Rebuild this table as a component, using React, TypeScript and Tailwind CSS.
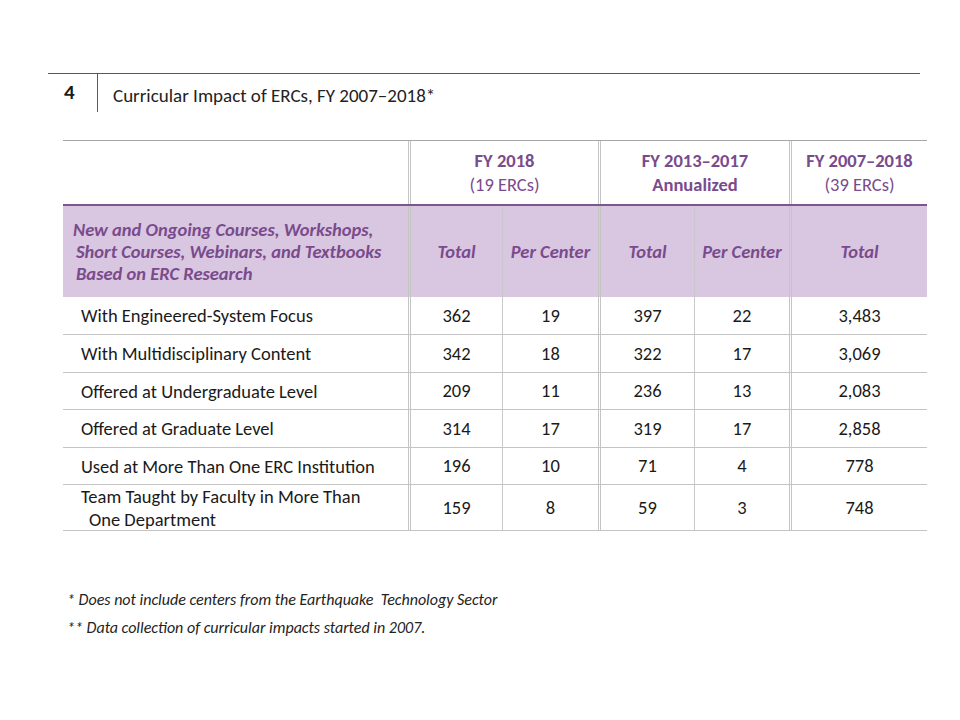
import React from "react";

const font = { fontFamily: "Carlito, Calibri, Lato, 'Open Sans', sans-serif" };

const rows = [
  { label: ["With Engineered-System Focus"], v: ["362", "19", "397", "22", "3,483"], h: "h-[37px]" },
  { label: ["With Multidisciplinary Content"], v: ["342", "18", "322", "17", "3,069"], h: "h-[37px]" },
  { label: ["Offered at Undergraduate Level"], v: ["209", "11", "236", "13", "2,083"], h: "h-[36px]" },
  { label: ["Offered at Graduate Level"], v: ["314", "17", "319", "17", "2,858"], h: "h-[37px]" },
  { label: ["Used at More Than One ERC Institution"], v: ["196", "10", "71", "4", "778"], h: "h-[36px]" },
  { label: ["Team Taught by Faculty in More Than", "One Department"], v: ["159", "8", "59", "3", "748"], h: "h-[45px]" },
];

// left border style per column index (0..5)
const sep = [
  "",
  "border-l-[3px] border-double border-l-[#c4c4c4]",
  "border-l border-l-[#c9c9c9]",
  "border-l-[3px] border-double border-l-[#c4c4c4]",
  "border-l border-l-[#c9c9c9]",
  "border-l-[3px] border-double border-l-[#c4c4c4]",
];

const App = () => {
  return (
    <div className="w-[960px] h-[720px] bg-white text-[#1a1a1a] overflow-hidden" style={font}>
      <div className="pt-[73px] pl-[48px]">
        <div className="w-[872px] border-t border-[#595959] flex">
          <div className="w-[50px] h-[38px] border-r border-[#595959] flex items-center pl-[16px] text-[21px] font-bold">
            4
          </div>
          <div className="flex items-center pl-[15px] pt-[6px] text-[19px] text-[#222]">
            Curricular Impact of ERCs, FY 2007–2018*
          </div>
        </div>
      </div>

      <div className="ml-[63px] mt-[28px] w-[864px] border-t border-[#a6a6a6]">
        <div className="grid grid-cols-[345px_94px_96px_96px_95px_138px]">
          {/* header row 1 */}
          <div className="h-[63px]" />
          <div className={`col-span-2 h-[63px] flex flex-col items-center justify-center text-[18.5px] leading-[24px] text-[#7a4b8c] ${sep[1]}`}>
            <span className="font-bold">FY 2018</span>
            <span>(19 ERCs)</span>
          </div>
          <div className={`col-span-2 h-[63px] flex flex-col items-center justify-center text-[18.5px] leading-[24px] text-[#7a4b8c] font-bold ${sep[3]}`}>
            <span>FY 2013–2017</span>
            <span>Annualized</span>
          </div>
          <div className={`h-[63px] flex flex-col items-center justify-center text-[18.5px] leading-[24px] text-[#7a4b8c] ${sep[5]}`}>
            <span className="font-bold">FY 2007–2018</span>
            <span>(39 ERCs)</span>
          </div>
        </div>

        {/* header row 2 */}
        <div className="grid grid-cols-[345px_94px_96px_96px_95px_138px] border-t-2 border-[#7d5690] bg-[#d9c6e1] text-[#7a4b8c] font-bold italic text-[18.5px]">
          <div className="h-[91px] flex flex-col justify-center pl-[10px] leading-[22px]">
            <span>New and Ongoing Courses, Workshops,</span>
            <span className="pl-[3px]">Short Courses, Webinars, and Textbooks</span>
            <span className="pl-[3px]">Based on ERC Research</span>
          </div>
          {["Total", "Per Center", "Total", "Per Center", "Total"].map((t, i) => (
            <div key={i} className={`h-[91px] flex items-center justify-center ${sep[i + 1]}`}>
              {t}
            </div>
          ))}
        </div>

        {/* data rows */}
        {rows.map((r, ri) => (
          <div
            key={ri}
            className="grid grid-cols-[345px_94px_96px_96px_95px_138px] border-b border-[#c4c4c4] text-[18.5px]"
          >
            <div className={`${r.h} flex flex-col justify-center pl-[18px] leading-[23px]`}>
              {r.label.map((l, li) => (
                <span key={li} className={li > 0 ? "pl-[8px]" : ""}>
                  {l}
                </span>
              ))}
            </div>
            {r.v.map((v, vi) => (
              <div key={vi} className={`${r.h} flex items-center justify-center ${sep[vi + 1]}`}>
                {v}
              </div>
            ))}
          </div>
        ))}
      </div>

      <div className="ml-[67px] mt-[59px] text-[16px] italic text-[#222] flex flex-col gap-[9px] leading-[19px]">
        <span>* Does not include centers from the Earthquake&nbsp; Technology Sector</span>
        <span>** Data collection of curricular impacts started in 2007.</span>
      </div>
    </div>
  );
};

export default App;
